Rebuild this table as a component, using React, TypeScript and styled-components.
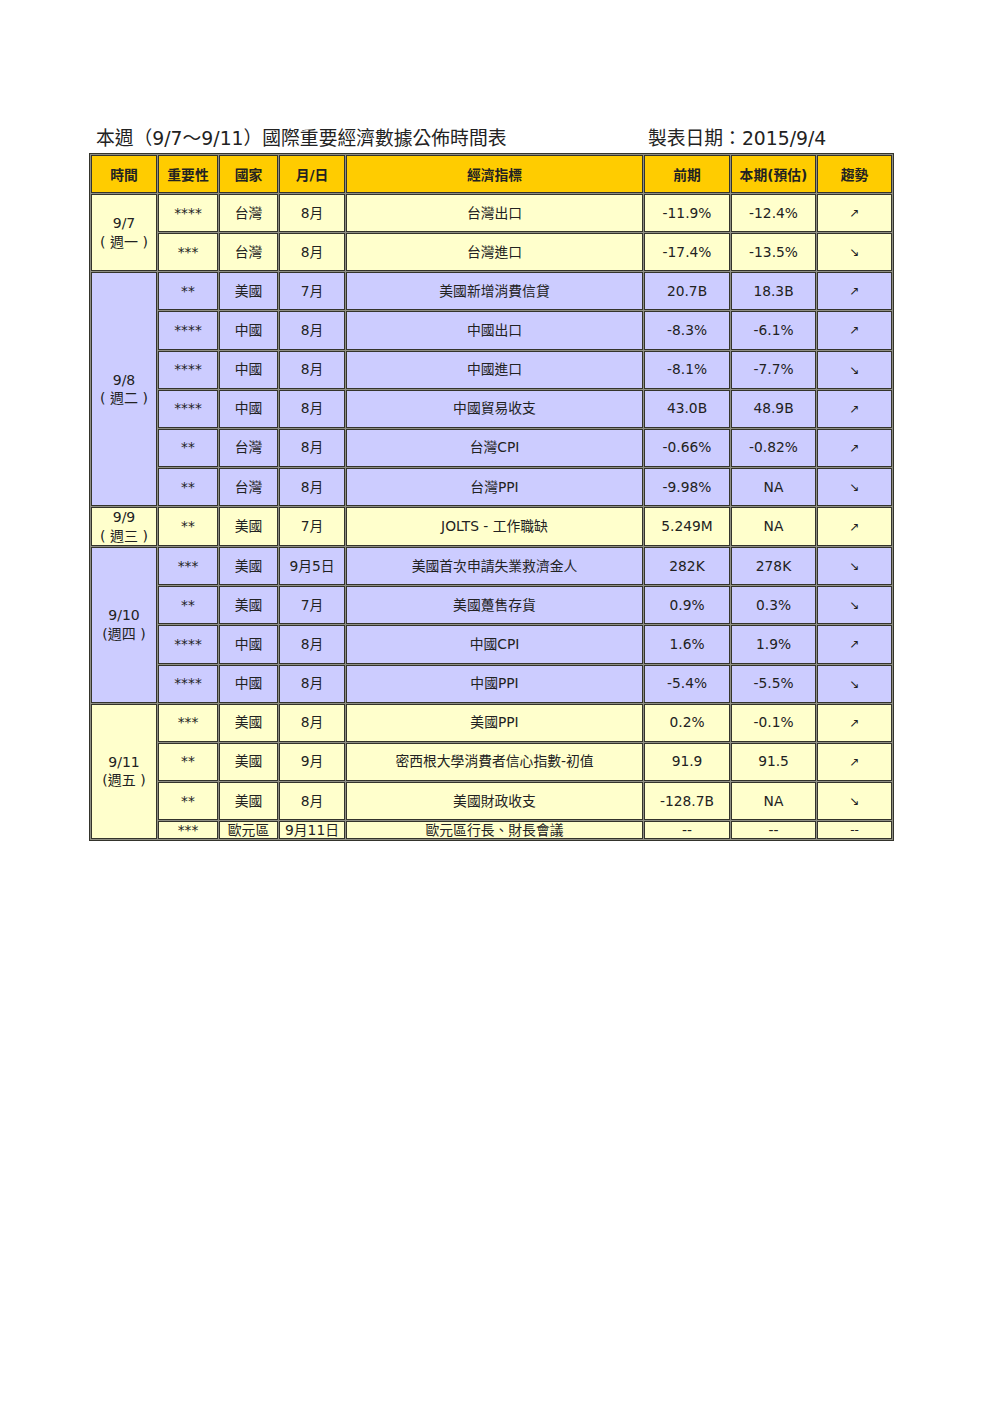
import React from 'react';
import styled, { createGlobalStyle } from 'styled-components';

type Row = {
    stars: string;
    country: string;
    date: string;
    name: string;
    prev: string;
    est: string;
    trend: string;
};

type Group = {
    day: string;
    week: string;
    tone: 'yellow' | 'purple';
    rows: Row[];
};

const colors = {
    header: '#ffcc00',
    yellow: '#ffffcc',
    purple: '#ccccff',
    line: '#34342c',
    gap: '#8e8e84',
    text: '#222222',
};

const groups: Group[] = [
    {
        day: '9/7',
        week: '( 週一 )',
        tone: 'yellow',
        rows: [
            { stars: '****', country: '台灣', date: '8月', name: '台灣出口', prev: '-11.9%', est: '-12.4%', trend: '↗' },
            { stars: '***', country: '台灣', date: '8月', name: '台灣進口', prev: '-17.4%', est: '-13.5%', trend: '↘' },
        ],
    },
    {
        day: '9/8',
        week: '( 週二 )',
        tone: 'purple',
        rows: [
            { stars: '**', country: '美國', date: '7月', name: '美國新增消費信貸', prev: '20.7B', est: '18.3B', trend: '↗' },
            { stars: '****', country: '中國', date: '8月', name: '中國出口', prev: '-8.3%', est: '-6.1%', trend: '↗' },
            { stars: '****', country: '中國', date: '8月', name: '中國進口', prev: '-8.1%', est: '-7.7%', trend: '↘' },
            { stars: '****', country: '中國', date: '8月', name: '中國貿易收支', prev: '43.0B', est: '48.9B', trend: '↗' },
            { stars: '**', country: '台灣', date: '8月', name: '台灣CPI', prev: '-0.66%', est: '-0.82%', trend: '↗' },
            { stars: '**', country: '台灣', date: '8月', name: '台灣PPI', prev: '-9.98%', est: 'NA', trend: '↘' },
        ],
    },
    {
        day: '9/9',
        week: '( 週三 )',
        tone: 'yellow',
        rows: [
            { stars: '**', country: '美國', date: '7月', name: 'JOLTS - 工作職缺', prev: '5.249M', est: 'NA', trend: '↗' },
        ],
    },
    {
        day: '9/10',
        week: '(週四 )',
        tone: 'purple',
        rows: [
            { stars: '***', country: '美國', date: '9月5日', name: '美國首次申請失業救濟金人', prev: '282K', est: '278K', trend: '↘' },
            { stars: '**', country: '美國', date: '7月', name: '美國躉售存貨', prev: '0.9%', est: '0.3%', trend: '↘' },
            { stars: '****', country: '中國', date: '8月', name: '中國CPI', prev: '1.6%', est: '1.9%', trend: '↗' },
            { stars: '****', country: '中國', date: '8月', name: '中國PPI', prev: '-5.4%', est: '-5.5%', trend: '↘' },
        ],
    },
    {
        day: '9/11',
        week: '(週五 )',
        tone: 'yellow',
        rows: [
            { stars: '***', country: '美國', date: '8月', name: '美國PPI', prev: '0.2%', est: '-0.1%', trend: '↗' },
            { stars: '**', country: '美國', date: '9月', name: '密西根大學消費者信心指數-初值', prev: '91.9', est: '91.5', trend: '↗' },
            { stars: '**', country: '美國', date: '8月', name: '美國財政收支', prev: '-128.7B', est: 'NA', trend: '↘' },
            { stars: '***', country: '歐元區', date: '9月11日', name: '歐元區行長、財長會議', prev: '--', est: '--', trend: '--' },
        ],
    },
];

const headers = ['時間', '重要性', '國家', '月/日', '經濟指標', '前期', '本期(預估)', '趨勢'];
const widths = [66, 60, 59, 66, 297, 86, 85, 75];

const GlobalStyle = createGlobalStyle`
    html, body {
        margin: 0;
        padding: 0;
        background: #ffffff;
    }
    body {
        font-family: "DejaVu Sans", "Noto Sans CJK TC", sans-serif;
        color: ${colors.text};
    }
`;

const Page = styled.div`
    padding: 123px 0 0 89px;
`;

const TitleBar = styled.div`
    display: flex;
    align-items: baseline;
    padding-left: 7px;
    height: 27px;
    margin-bottom: 3px;
    font-size: 18.8px;
`;

const Title = styled.span`
    width: 552px;
`;

const MadeOn = styled.span``;

const Sheet = styled.table`
    width: 805px;
    table-layout: fixed;
    border-collapse: separate;
    border-spacing: 1px;
    border: 1px solid ${colors.line};
    background: ${colors.gap};
`;

const HeadCell = styled.th`
    height: 36px;
    padding: 0;
    border: 1px solid ${colors.line};
    background: ${colors.header};
    font-size: 13.8px;
    font-weight: bold;
    text-align: center;
    vertical-align: middle;
`;

const Cell = styled.td<{ $tone: 'yellow' | 'purple'; $short?: boolean }>`
    height: ${({ $short }) => ($short ? '15px' : '36.15px')};
    padding: 0;
    border: 1px solid ${colors.line};
    background: ${({ $tone }) => colors[$tone]};
    font-size: 13.8px;
    line-height: ${({ $short }) => ($short ? '15px' : '17px')};
    text-align: center;
    vertical-align: middle;
    white-space: nowrap;
    overflow: hidden;
`;

const DayCell = styled(Cell)`
    font-size: 14px;
    line-height: 18.5px;
`;

const Trend = styled.span`
    font-size: 12px;
`;

export default function App() {
    return (
        <Page>
            <GlobalStyle />
            <TitleBar>
                <Title>本週（9/7～9/11）國際重要經濟數據公佈時間表</Title>
                <MadeOn>製表日期：2015/9/4</MadeOn>
            </TitleBar>
            <Sheet>
                <colgroup>
                    {widths.map((w, i) => (
                        <col key={i} style={{ width: w }} />
                    ))}
                </colgroup>
                <thead>
                    <tr>
                        {headers.map((h) => (
                            <HeadCell key={h}>{h}</HeadCell>
                        ))}
                    </tr>
                </thead>
                <tbody>
                    {groups.map((g) =>
                        g.rows.map((r, i) => {
                            const short = r.trend === '--';
                            return (
                                <tr key={g.day + i}>
                                    {i === 0 && (
                                        <DayCell $tone={g.tone} rowSpan={g.rows.length}>
                                            {g.day}
                                            <br />
                                            {g.week}
                                        </DayCell>
                                    )}
                                    <Cell $tone={g.tone} $short={short}>{r.stars}</Cell>
                                    <Cell $tone={g.tone} $short={short}>{r.country}</Cell>
                                    <Cell $tone={g.tone} $short={short}>{r.date}</Cell>
                                    <Cell $tone={g.tone} $short={short}>{r.name}</Cell>
                                    <Cell $tone={g.tone} $short={short}>{r.prev}</Cell>
                                    <Cell $tone={g.tone} $short={short}>{r.est}</Cell>
                                    <Cell $tone={g.tone} $short={short}>
                                        <Trend>{r.trend}</Trend>
                                    </Cell>
                                </tr>
                            );
                        })
                    )}
                </tbody>
            </Sheet>
        </Page>
    );
}
